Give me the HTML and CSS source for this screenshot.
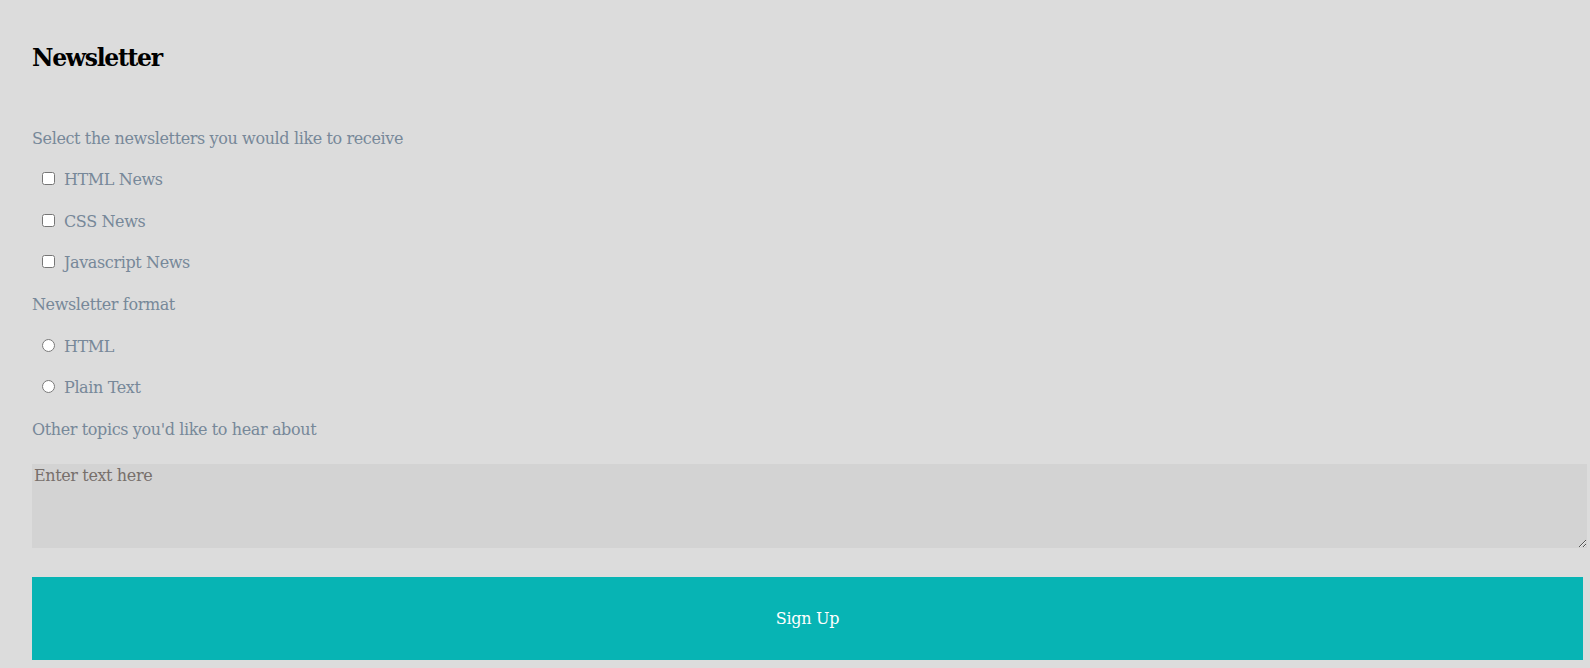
FILE: index.html
```html
<!DOCTYPE html>
<html lang="en">
<head>
<meta charset="utf-8">
<title>Newsletter</title>
<link rel="stylesheet" href="styles.css">
</head>
<body>
<main class="page">
  <h2 class="title">Newsletter</h2>
  <form class="form">
    <p class="label">Select the newsletters you would like to receive</p>
    <label class="option"><input class="check" type="checkbox">HTML News</label>
    <label class="option"><input class="check" type="checkbox">CSS News</label>
    <label class="option"><input class="check" type="checkbox">Javascript News</label>
    <p class="label">Newsletter format</p>
    <label class="option"><input class="check" type="radio" name="format">HTML</label>
    <label class="option"><input class="check" type="radio" name="format">Plain Text</label>
    <p class="label">Other topics you'd like to hear about</p>
    <textarea class="topics" placeholder="Enter text here"></textarea>
    <button class="submit" type="button">Sign Up</button>
  </form>
</main>
</body>
</html>
```

FILE: styles.css
```css
html, body {
  margin: 0;
  background: #dcdcdc;
}

body {
  font-family: "DejaVu Serif", "Liberation Serif", serif;
}

.page {
  padding: 0 7px 0 32px;
}

.title {
  margin: 44px 0 0;
  font-size: 23.5px;
  line-height: 28.8px;
  font-weight: bold;
  letter-spacing: -1.3px;
  color: #000;
}

.form {
  margin-top: 52.8px;
}

.label,
.option {
  display: block;
  margin: 0 0 16px;
  font-size: 16px;
  line-height: 25.6px;
  letter-spacing: -0.38px;
  color: #778899;
}

.check {
  width: 13px;
  height: 13px;
  margin: 0 9px 2px 10px;
  vertical-align: baseline;
}

.topics {
  display: block;
  box-sizing: content-box;
  width: 100%;
  height: 80px;
  margin: 21.6px 0 0;
  padding: 2px;
  border: none;
  background: #d3d3d3;
  font-family: inherit;
  font-size: 16px;
  line-height: normal;
  letter-spacing: -0.38px;
  color: #333;
}

.topics::placeholder {
  color: #776f6b;
  opacity: 1;
}

.submit {
  display: block;
  width: 100%;
  height: 83px;
  margin: 29px 0 0;
  padding: 0;
  border: none;
  background: #07b4b4;
  color: #fff;
  font-family: inherit;
  font-size: 16px;
  font-weight: normal;
  letter-spacing: -0.3px;
}
```
